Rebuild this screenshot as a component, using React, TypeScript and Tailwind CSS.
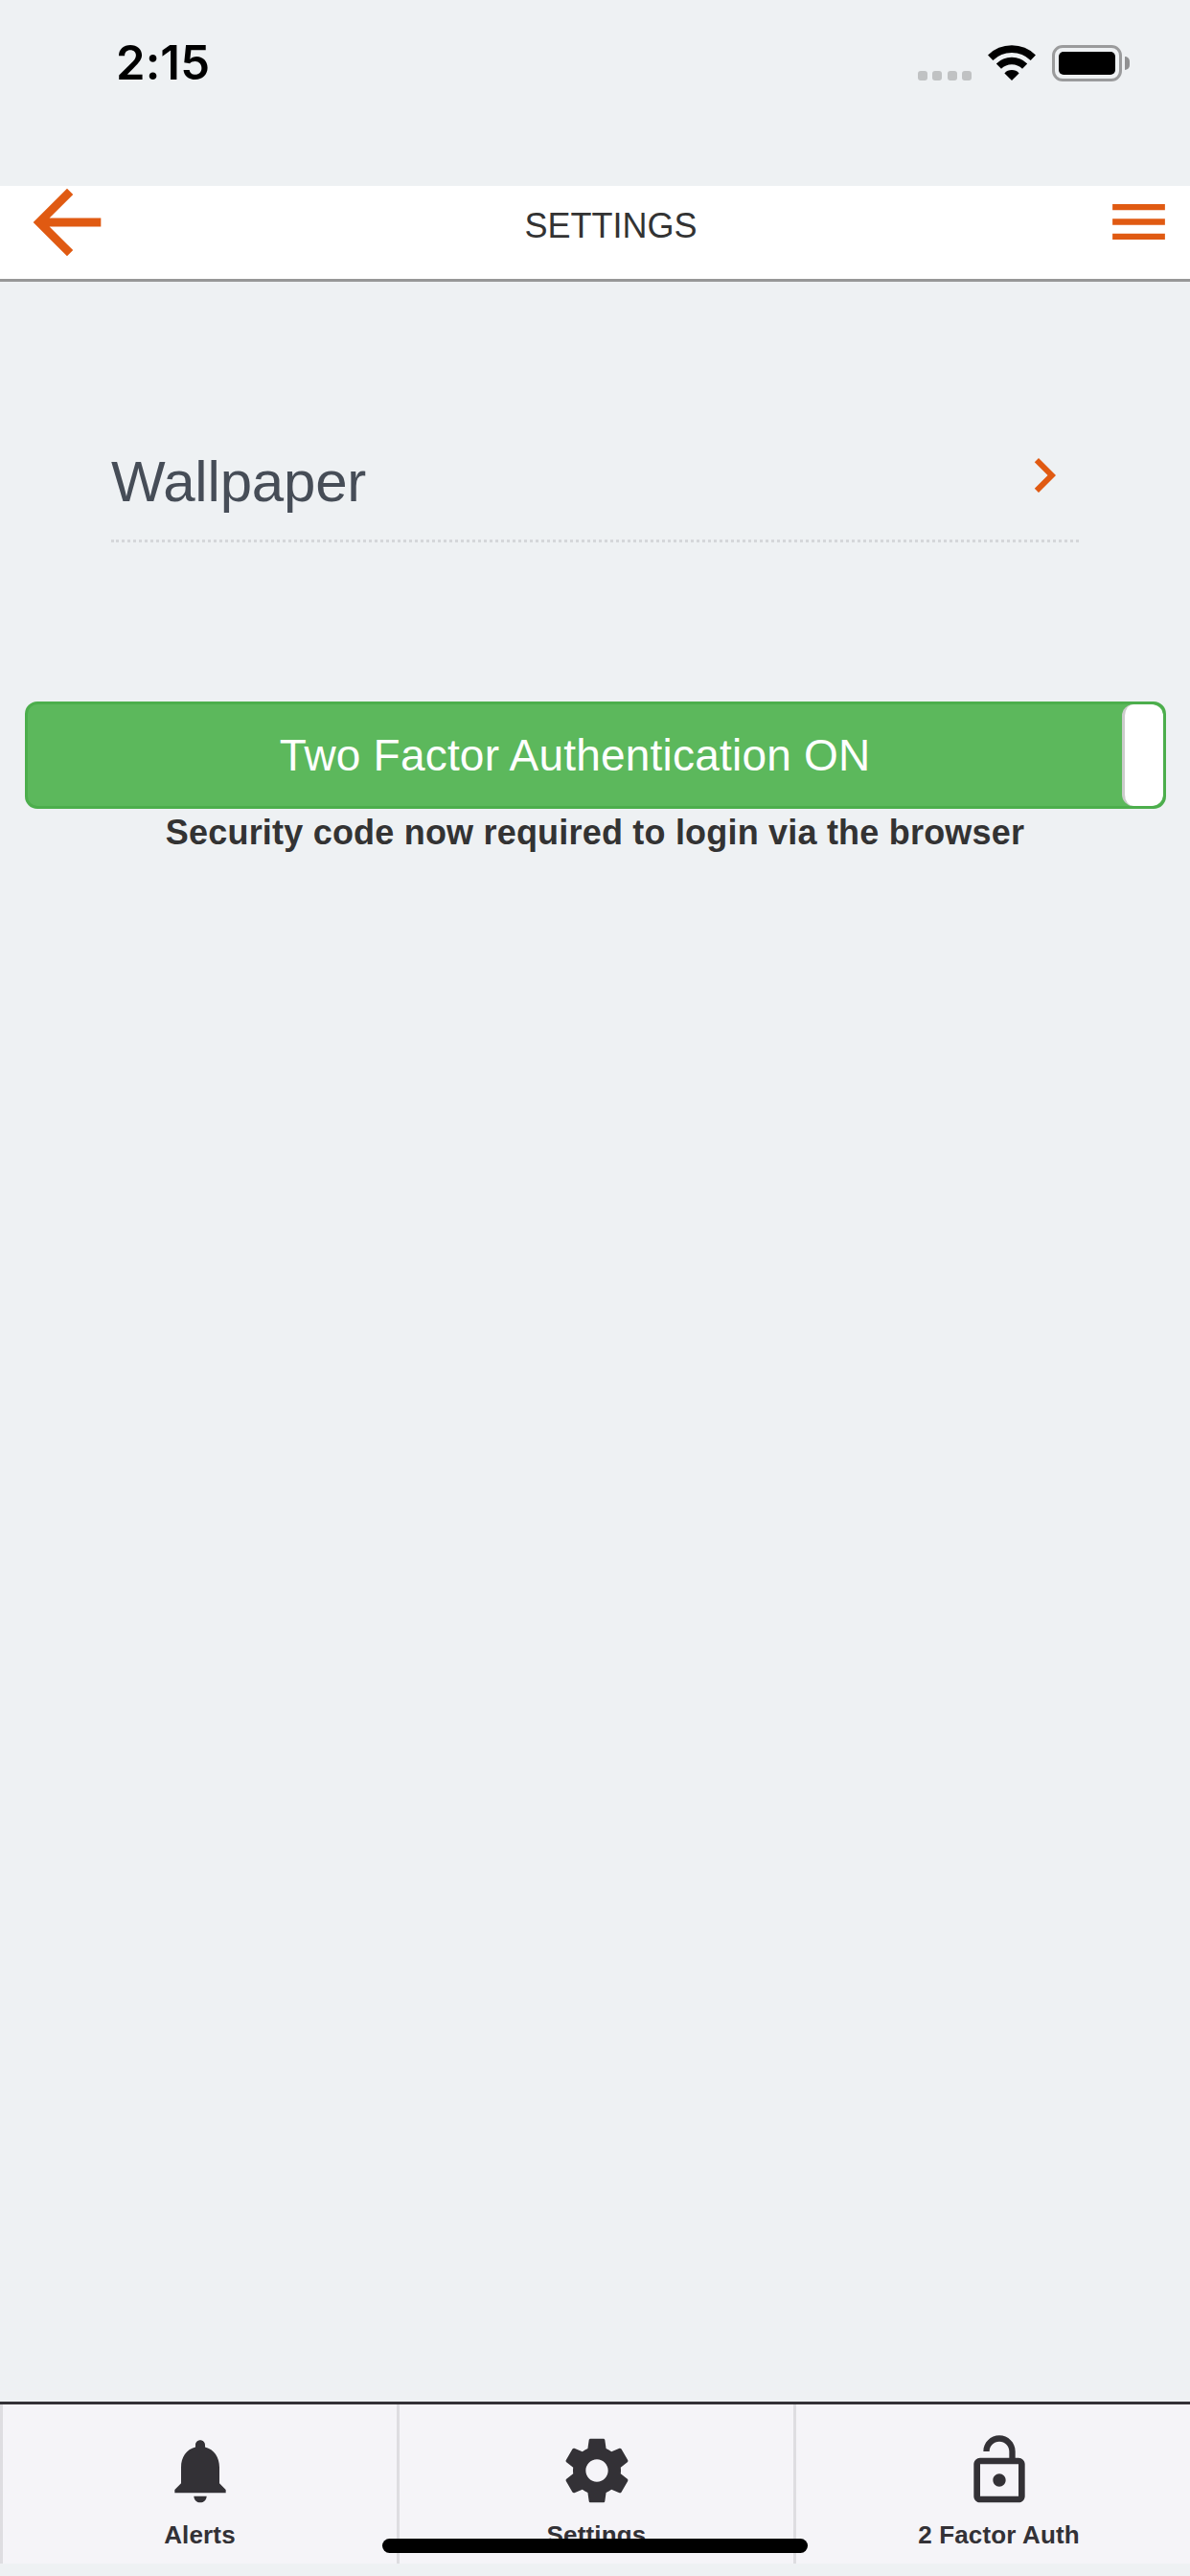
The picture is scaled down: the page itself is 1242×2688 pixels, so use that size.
import React from 'react';

const Icon: React.FC<{
  path: string;
  className: string;
}> = ({ path, className }) => (
  <svg viewBox="0 0 24 24" fill="currentColor" className={`block shrink-0 ${className}`} aria-hidden="true">
    <path d={path} />
  </svg>
);

const ICONS = {
  back: 'M20 11H7.83l5.59-5.59L12 4l-8 8 8 8 1.41-1.41L7.83 13H20v-2z',
  menu: 'M3 18.1h18v-2.1H3v2.1zm0-5.05h18v-2.1H3v2.1zM3 5.9V8h18V5.9H3z',
  chevron: 'M10 6L8.59 7.41 13.17 12l-4.58 4.59L10 18l6-6z',
  bell: 'M12 22c1.1 0 2-.9 2-2h-4c0 1.1.89 2 2 2zm6-6v-5c0-3.07-1.64-5.64-4.5-6.32V4c0-.83-.67-1.5-1.5-1.5s-1.5.67-1.5 1.5v.68C7.63 5.36 6 7.92 6 11v5l-2 2v1h16v-1l-2-2z',
  gear: 'M19.43 12.98c.04-.32.07-.64.07-.98s-.03-.66-.07-.98l2.11-1.65c.19-.15.24-.42.12-.64l-2-3.46c-.12-.22-.39-.3-.61-.22l-2.49 1c-.52-.4-1.08-.73-1.69-.98l-.38-2.65C14.46 2.18 14.25 2 14 2h-4c-.25 0-.46.18-.49.42l-.38 2.65c-.61.25-1.17.59-1.69.98l-2.49-1c-.23-.09-.49 0-.61.22l-2 3.46c-.13.22-.07.49.12.64l2.11 1.65c-.04.32-.07.65-.07.98s.03.66.07.98l-2.11 1.65c-.19.15-.24.42-.12.64l2 3.46c.12.22.39.3.61.22l2.49-1c.52.4 1.08.73 1.69.98l.38 2.65c.03.24.24.42.49.42h4c.25 0 .46-.18.49-.42l.38-2.65c.61-.25 1.17-.59 1.69-.98l2.49 1c.23.09.49 0 .61-.22l2-3.46c.12-.22.07-.49-.12-.64l-2.11-1.65zM12 15.5c-1.93 0-3.5-1.57-3.5-3.5s1.57-3.5 3.5-3.5 3.5 1.57 3.5 3.5-1.57 3.5-3.5 3.5z',
  lockOpen: 'M12 17c1.1 0 2-.9 2-2s-.9-2-2-2-2 .9-2 2 .9 2 2 2zm6-9h-1V6c0-2.76-2.24-5-5-5S7 3.24 7 6h1.9c0-1.71 1.39-3.1 3.1-3.1 1.71 0 3.1 1.39 3.1 3.1v2H6c-1.1 0-2 .9-2 2v10c0 1.1.9 2 2 2h12c1.1 0 2-.9 2-2V10c0-1.1-.9-2-2-2zm0 12H6V10h12v10z',
};

const StatusBar: React.FC = () => (
  <div className="flex h-[194px] shrink-0 items-start justify-between pl-[121px] pr-[63px]">
    <span className="mt-[36px] font-['Inter',sans-serif] text-[49px] leading-[60px] font-semibold tracking-[0.1px] text-black">2:15</span>
    <div className="mt-[47px] flex h-[38px] items-start">
      <div className="mt-[27px] flex gap-[5.4px]">
        {[0, 1, 2, 3].map((dot) => (
          <span key={dot} className="size-[10px] rounded-[3px] bg-[#c0c2c3]" />
        ))}
      </div>
      <svg viewBox="0 0 50 37" fill="none" stroke="#000" className="ml-[17px] block h-[37px] w-[50px]" aria-hidden="true">
        <path d="M2.7 13.2a32 32 0 0 1 44.6 0" strokeWidth="7.6" />
        <path d="M11.4 22.1a19.4 19.4 0 0 1 27.2 0" strokeWidth="7.4" />
        <path d="M25 37l-7.6-7.6a10.4 10.4 0 0 1 15.2 0z" fill="#000" stroke="none" />
      </svg>
      <div className="ml-[17px] flex items-center">
        <div className="h-[38px] w-[73px] rounded-[11px] border-3 border-[#9a9b9c] p-[4px]">
          <div className="h-full rounded-[5px] bg-black" />
        </div>
        <div className="ml-[3px] h-[14px] w-[5px] rounded-r-[5px] bg-[#909192]" />
      </div>
    </div>
  </div>
);

const Header: React.FC<{ title: string }> = ({ title }) => (
  <header className="flex h-[100px] shrink-0 justify-between border-b-3 border-[#979797] bg-white px-[17px] text-[#e05a12]">
    <button type="button" aria-label="Back" className="-mt-[15px] h-[106px]">
      <Icon path={ICONS.back} className="size-[106px]" />
    </button>
    <h1 className="mt-[21px] text-[36px] leading-[42px] text-[#333]">{title}</h1>
    <button type="button" aria-label="Menu" className="mt-px h-[73px]">
      <Icon path={ICONS.menu} className="size-[73px]" />
    </button>
  </header>
);

const TABS = [
  { label: 'Alerts', icon: ICONS.bell },
  { label: 'Settings', icon: ICONS.gear },
  { label: '2 Factor Auth', icon: ICONS.lockOpen },
];

// The last tab runs slightly past the right edge of the screen
const TabBar: React.FC = () => (
  <nav className="mb-[13px] grid h-[169px] shrink-0 grid-cols-[414px_414px_426px] overflow-hidden border-t-3 border-[#333136] bg-[#f5f4f8]">
    {TABS.map((tab) => (
      <button
        key={tab.label}
        type="button"
        className="flex flex-col items-center border-l-3 border-[#dedde1] pt-[29px] text-[#333136]"
      >
        <Icon path={tab.icon} className="size-[80px]" />
        <span className="mt-[12px] text-[26px] leading-[30px] font-bold tracking-[0.15px]">{tab.label}</span>
      </button>
    ))}
  </nav>
);

const App: React.FC = () => {
  const [twoFactor, setTwoFactor] = React.useState(true);

  return (
    <div className="relative flex h-[2688px] w-[1242px] flex-col overflow-hidden bg-[#eef1f3] font-['Liberation_Sans',Arial,sans-serif]">
      <StatusBar />
      <Header title="SETTINGS" />

      <main className="flex-1 px-[26px] pt-[145px]">
        <button
          type="button"
          className="mx-[90px] flex h-[127px] w-[1010px] items-start justify-between border-b-3 border-dotted border-[#d5d7da] text-left"
        >
          <span className="mt-[30px] text-[60px] leading-[68px] tracking-[-0.2px] text-[#464d57]">Wallpaper</span>
          <Icon path={ICONS.chevron} className="mt-[21px] size-[72px] text-[#e05a12]" />
        </button>

        <button
          type="button"
          role="switch"
          aria-checked={twoFactor}
          onClick={() => setTwoFactor(!twoFactor)}
          className="mt-[166px] flex h-[112px] w-[1191px] overflow-hidden rounded-[13px] border-3 border-[#4cae4c] bg-[#5cb85c]"
        >
          <span className="flex-1 pt-[26px] text-[46px] leading-[54px] tracking-[0.2px] text-white">
            Two Factor Authentication {twoFactor ? 'ON' : 'OFF'}
          </span>
          <span className="h-full w-[43px] rounded-[12px] border-l-3 border-[#ccc] bg-white" />
        </button>

        <p className="mt-[4px] text-center text-[36px] leading-[42px] font-bold tracking-[0.2px] text-[#333]">
          Security code now required to login via the browser
        </p>
      </main>

      <TabBar />

      {/* home indicator */}
      <div className="absolute bottom-[24px] left-[399px] h-[15px] w-[444px] rounded-full bg-black" />
    </div>
  );
};

export default App;
